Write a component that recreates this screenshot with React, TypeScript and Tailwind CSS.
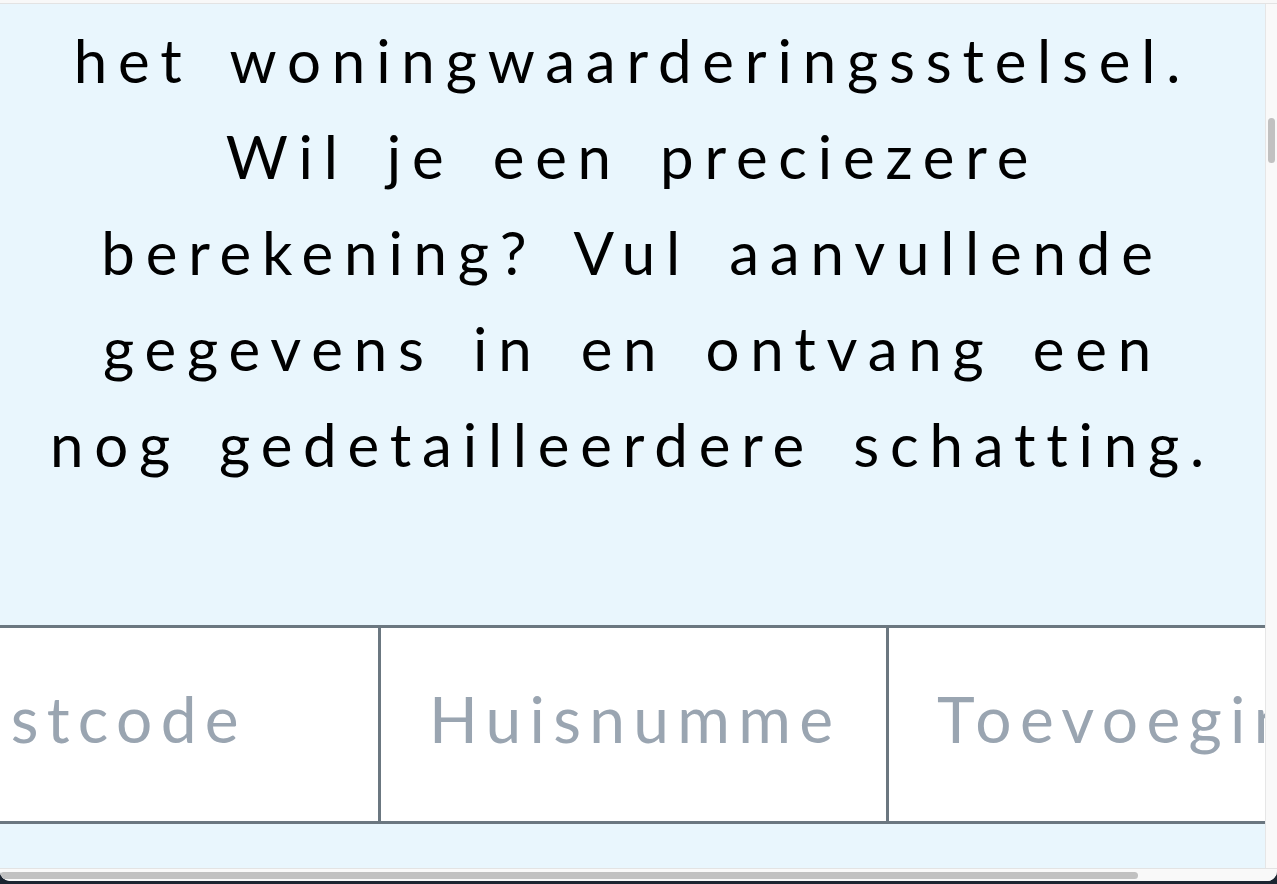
const LINES = [
  'het woningwaarderingsstelsel.',
  'Wil je een preciezere',
  'berekening? Vul aanvullende',
  'gegevens in en ontvang een',
  'nog gedetailleerdere schatting.',
];

const FIELDS = ['Postcode', 'Huisnummer', 'Toevoeging'];

export default function App() {
  return (
    <div className="flex h-[884px] w-[1277px] flex-col overflow-hidden bg-[#1c2531]">
      {/* Browser window */}
      <div className="flex min-h-0 flex-1 flex-col overflow-hidden rounded-b-[10px] bg-[#f8f8f8]">
        <div className="h-[4px] border-b border-[#e3e3e3] bg-[#f8f8f8]" />

        <div className="flex min-h-0 flex-1">
          {/* Page content */}
          <main className="flex min-w-0 flex-1 flex-col overflow-hidden bg-[#e9f6fd] font-['Lato',sans-serif]">
            <p className="pt-[8px] text-center text-[60px] leading-[96px] tracking-[0.18em] [word-spacing:12px] text-black">
              {LINES.map((l, i) => (
                <span key={i} className="block whitespace-nowrap">
                  {l}
                </span>
              ))}
            </p>

            <div className="mt-[133px] flex border-y-[3px] border-[#6b7780] bg-white">
              <div className="-ml-[127px] flex">
                {FIELDS.map((f, i) => (
                  <input
                    key={f}
                    placeholder={f}
                    className={`h-[193px] w-[508px] shrink-0 bg-white pr-[48px] pb-[12px] pl-[48px] text-[64px] tracking-[0.13em] text-black outline-none placeholder:text-[#9aa5b1] ${
                      i < FIELDS.length - 1 ? 'border-r-[3px] border-[#6b7780]' : ''
                    }`}
                  />
                ))}
              </div>
            </div>
          </main>

          {/* Vertical scrollbar */}
          <div className="flex w-[12px] shrink-0 justify-center border-l border-[#e6e6e6] bg-[#f9f9f9]">
            <div className="mt-[114px] h-[45px] w-[7px] rounded-full bg-[#c1c1c1]" />
          </div>
        </div>

        {/* Horizontal scrollbar */}
        <div className="flex h-[13px] shrink-0 items-center border-t border-[#e3e3e3] bg-[#f9f9f9]">
          <div className="h-[7px] w-[1138px] rounded-full bg-[#c1c1c1]" />
        </div>
      </div>
      <div className="h-[3px] shrink-0" />
    </div>
  );
}
